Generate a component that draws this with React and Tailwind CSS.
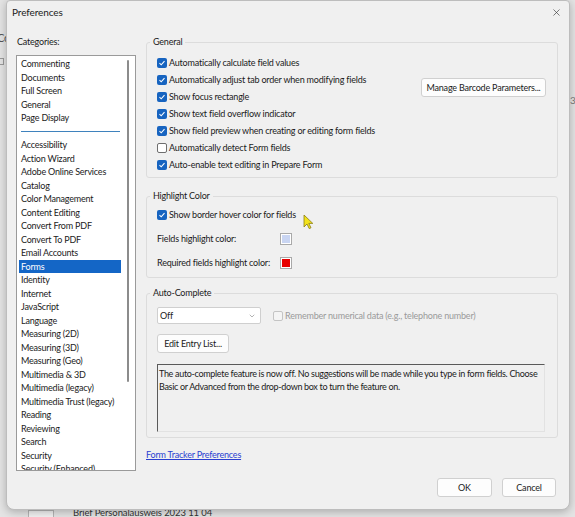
import { ChevronDown, X } from 'lucide-react'

const FONT = { fontFamily: 'Lato, "Noto Sans", sans-serif' }

const TOP_ITEMS = ['Commenting', 'Documents', 'Full Screen', 'General', 'Page Display']
const ITEMS = [
  'Accessibility', 'Action Wizard', 'Adobe Online Services', 'Catalog', 'Color Management',
  'Content Editing', 'Convert From PDF', 'Convert To PDF', 'Email Accounts', 'Forms',
  'Identity', 'Internet', 'JavaScript', 'Language', 'Measuring (2D)', 'Measuring (3D)',
  'Measuring (Geo)', 'Multimedia & 3D', 'Multimedia (legacy)', 'Multimedia Trust (legacy)',
  'Reading', 'Reviewing', 'Search', 'Security', 'Security (Enhanced)',
]

const GENERAL = [
  ['Automatically calculate field values', true],
  ['Automatically adjust tab order when modifying fields', true],
  ['Show focus rectangle', true],
  ['Show text field overflow indicator', true],
  ['Show field preview when creating or editing form fields', true],
  ['Automatically detect Form fields', false],
  ['Auto-enable text editing in Prepare Form', true],
]

function Check({ on, disabled }) {
  if (!on) {
    return (
      <span className={`w-[10px] h-[10px] rounded-[2px] border shrink-0 ${disabled ? 'border-[#c4c4c4] bg-[#f4f4f4]' : 'border-[#6e6e6e] bg-white'}`} />
    )
  }
  return (
    <span className="w-[10px] h-[10px] rounded-[2px] bg-[#1764c0] shrink-0 flex items-center justify-center">
      <svg width="8" height="8" viewBox="0 0 8 8">
        <path d="M1.5 4.2 L3.2 5.8 L6.5 2.2" fill="none" stroke="white" strokeWidth="1.1" />
      </svg>
    </span>
  )
}

function Row({ label, on }) {
  return (
    <div className="h-[17px] flex items-center gap-[2px] whitespace-nowrap">
      <Check on={on} />
      <span>{label}</span>
    </div>
  )
}

function Button({ children, className = '' }) {
  return (
    <div className={`h-[19px] bg-[#fdfdfd] border border-[#d0d0d0] rounded-[3px] flex items-center justify-center whitespace-nowrap ${className}`}>
      {children}
    </div>
  )
}

function Group({ title, children, className = '' }) {
  return (
    <fieldset className={`border border-[#dcdcdc] rounded-[3px] ${className}`}>
      <legend className="ml-[3px] px-[3px] h-[12px] leading-[12px]">{title}</legend>
      {children}
    </fieldset>
  )
}

function Swatch({ color }) {
  return (
    <span className="w-[12px] h-[12px] border border-[#a9a9a9] bg-white p-[1px] flex shrink-0">
      <span className={`flex-1 ${color}`} />
    </span>
  )
}

export default function App() {
  return (
    <div className="w-[575px] h-[517px] relative overflow-hidden bg-[#e4e4e4] text-[9px] tracking-[-0.2px] text-[#1b1b1b] flex" style={FONT}>
      {/* app behind the dialog */}
      <span className="absolute left-[-3px] top-[32px] text-[11px] leading-[11px] text-[#555]">Cc</span>
      <span className="absolute left-[-4px] top-[58px] w-[8px] h-[7px] border border-[#999]" />
      <span className="absolute left-[28px] top-[510px] w-[26px] h-[8px] border-t border-x border-[#b5b5b5] bg-[#f2f2f2]" />
      <span className="absolute left-[73px] top-[507px] text-[9.5px] tracking-[-0.1px] leading-[11px] text-[#333]">Brief Personalausweis 2023 11 04</span>
      <span className="absolute left-[570px] top-[95px] text-[10px] leading-[10px] text-[#777]">3</span>

      {/* dialog */}
      <div className="relative ml-[6px] w-[564px] h-[510px] bg-[#f0f0f0] rounded-b-[8px] rounded-t-[4px] border border-[#bdbdbd] shadow-[0_2px_8px_rgba(0,0,0,0.25)] flex flex-col">
        <div className="h-[23px] flex items-center justify-between pl-[5px] pr-[7px]">
          <span className="text-[10px] tracking-[-0.1px]">Preferences</span>
          <X size={11} strokeWidth={1.4} className="text-[#333]" />
        </div>

        <div className="flex gap-[10px] px-[9px] pt-[12px]">
          {/* categories */}
          <div className="w-[120px] flex flex-col">
            <div className="h-[12px] leading-[12px] pl-[1px]">Categories:</div>
            <div className="mt-[7px] h-[416px] bg-white border border-[#9a9a9a] flex overflow-hidden">
              <div className="flex-1 pl-[2px] pt-[1px] overflow-hidden">
                {TOP_ITEMS.map(t => (
                  <div key={t} className="h-[13.5px] leading-[13.5px] px-[2px] whitespace-nowrap">{t}</div>
                ))}
                <div className="h-[13.75px] flex items-center pl-[2px] pr-[1px]">
                  <div className="w-full h-[1px] bg-[#3f82bd]" />
                </div>
                {ITEMS.map(t => (
                  <div key={t} className={`h-[13.5px] leading-[13.5px] px-[2px] whitespace-nowrap ${t === 'Forms' ? 'bg-[#1466c6] text-white' : ''}`}>{t}</div>
                ))}
              </div>
              <div className="w-[14px] flex justify-center">
                <div className="mt-[4px] w-[2px] h-[322px] rounded-full bg-[#8c8c8c]" />
              </div>
            </div>
          </div>

          {/* forms panel */}
          <div className="w-[412px] flex flex-col">
            <Group title="General">
              <div className="flex justify-between pl-[10px] pr-[11px] pt-[6px] pb-[4px]">
                <div className="flex flex-col">
                  {GENERAL.map(([l, on]) => <Row key={l} label={l} on={on} />)}
                </div>
                <Button className="mt-[24px] w-[125px]">Manage Barcode Parameters...</Button>
              </div>
            </Group>

            <Group title="Highlight Color" className="mt-[12px]">
              <div className="flex flex-col gap-[7px] pl-[10px] pt-[4px] pb-[6px]">
                <Row label="Show border hover color for fields" on />
                <div className="h-[17px] flex items-center whitespace-nowrap">
                  <span className="w-[123px]">Fields highlight color:</span>
                  <Swatch color="bg-[#c9d5f2]" />
                </div>
                <div className="h-[17px] flex items-center whitespace-nowrap">
                  <span className="w-[123px]">Required fields highlight color:</span>
                  <Swatch color="bg-[#e80000]" />
                </div>
              </div>
            </Group>

            <Group title="Auto-Complete" className="mt-[9px]">
              <div className="flex flex-col pl-[10px] pr-[11px] pt-[8px] pb-[5px]">
                <div className="flex items-center">
                  <div className="w-[104px] h-[17px] bg-white border border-[#cfcfcf] rounded-[2px] flex items-center justify-between pl-[2px] pr-[4px]">
                    <span>Off</span>
                    <ChevronDown size={8} strokeWidth={1.5} className="text-[#666]" />
                  </div>
                  <div className="ml-[12px] flex items-center gap-[2px] text-[#9a9a9a] whitespace-nowrap">
                    <Check on={false} disabled />
                    <span>Remember numerical data (e.g., telephone number)</span>
                  </div>
                </div>
                <Button className="mt-[10px] w-[72px] h-[18px]">Edit Entry List...</Button>
                <div className="mt-[11px] w-[388px] h-[68px] border-t-[1.5px] border-l-[1.5px] border-r border-b border-t-[#5a5a5a] border-l-[#5a5a5a] border-r-[#e2e2e2] border-b-[#e2e2e2] px-[1px] pt-[2px] leading-[13px] tracking-[-0.32px]">
                  The auto-complete feature is now off. No suggestions will be made while you type in form fields. Choose Basic or Advanced from the drop-down box to turn the feature on.
                </div>
              </div>
            </Group>

            <div className="mt-[11px] h-[12px] leading-[12px] text-[#2a3fd1] underline">Form Tracker Preferences</div>

            <div className="mt-[17px] mr-[2px] flex justify-end gap-[10px]">
              <Button className="w-[55px] border-[#5b87bd]">OK</Button>
              <Button className="w-[54px]">Cancel</Button>
            </div>
          </div>
        </div>

        {/* mouse pointer over the panel */}
        <svg className="absolute left-[296px] top-[213px]" width="11" height="16" viewBox="0 0 11 16">
          <path d="M1 1 L1 13 L4 10 L6.2 14.6 L8 13.8 L5.8 9.4 L9.8 9.4 Z" fill="#f2e21b" stroke="#8a7d12" strokeWidth="0.8" strokeLinejoin="round" />
        </svg>
      </div>
    </div>
  )
}
